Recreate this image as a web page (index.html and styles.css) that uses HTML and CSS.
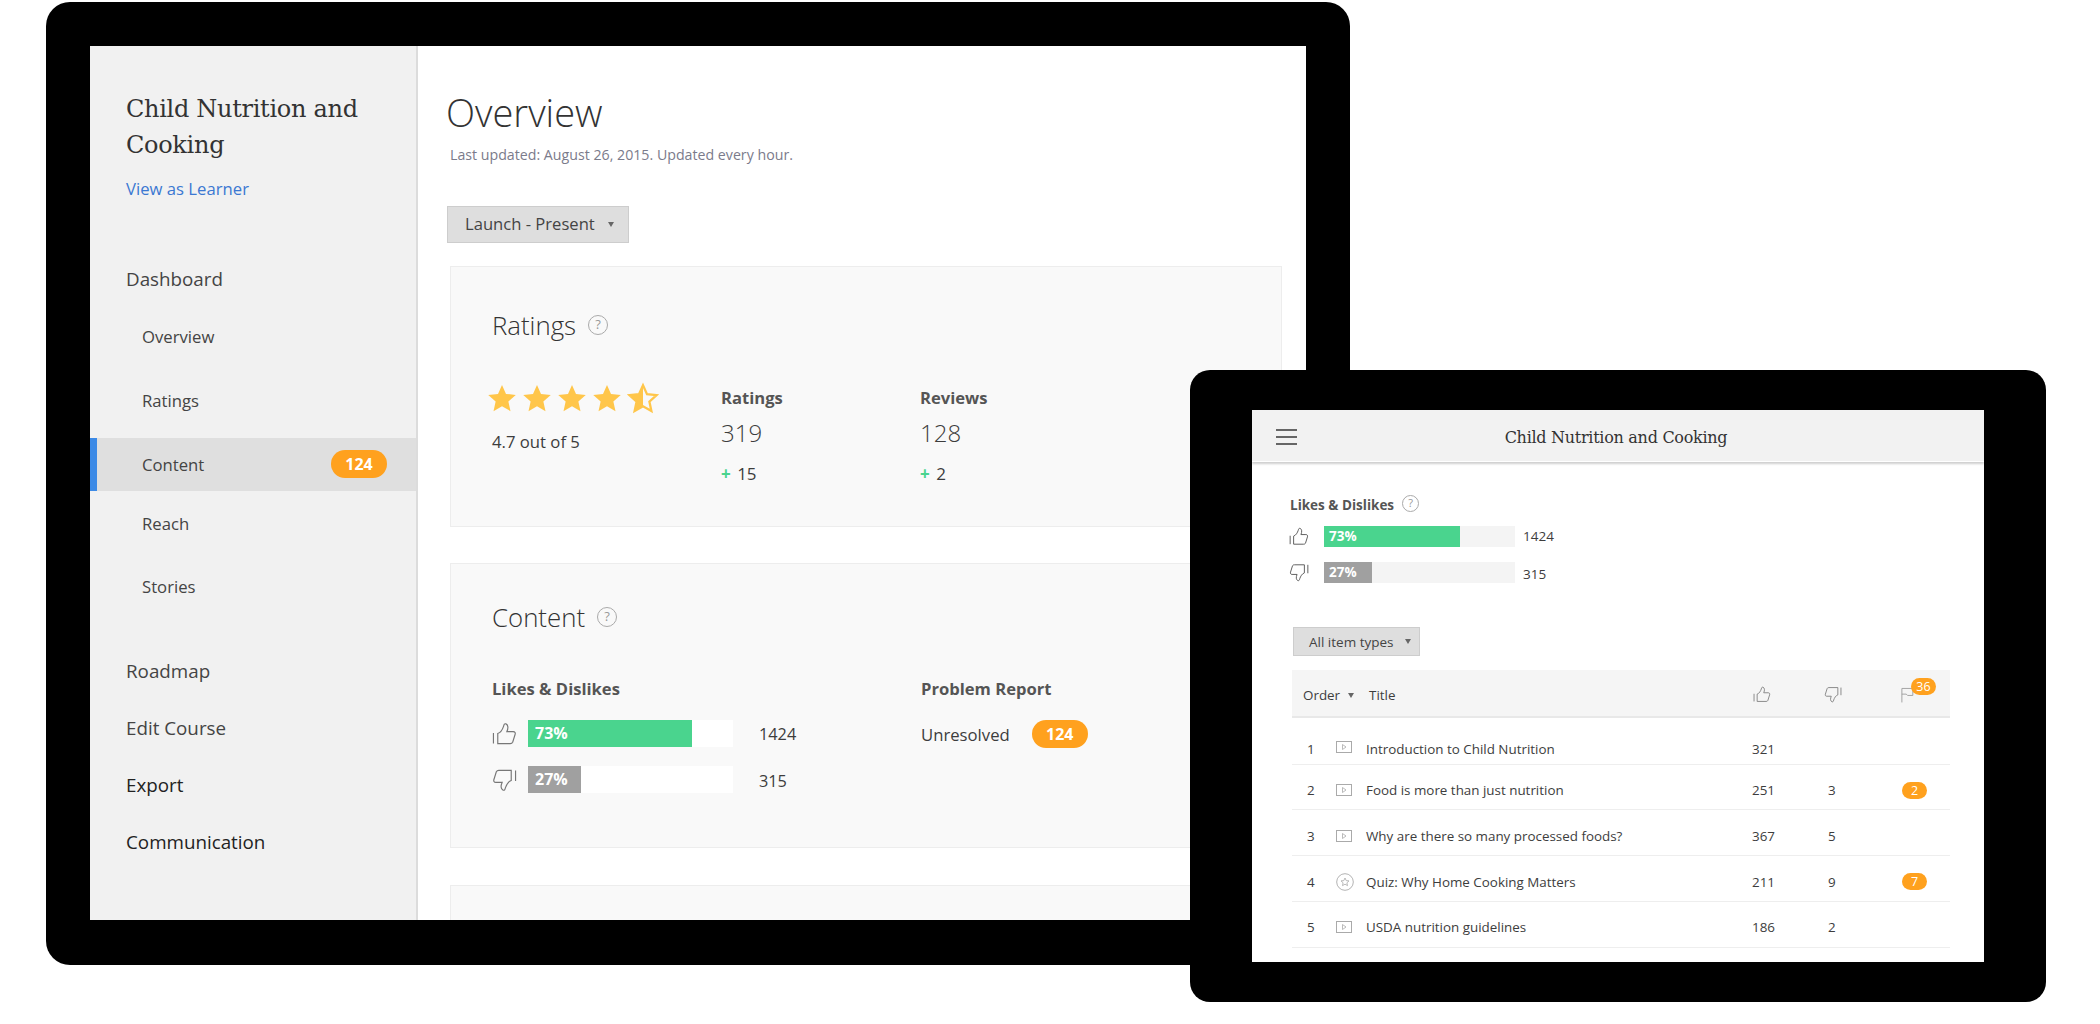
FILE: index.html
```html
<!DOCTYPE html>
<html lang="en">
<head>
  <meta charset="UTF-8" />
  <title>Child Nutrition and Cooking - Overview</title>
  <link rel="stylesheet" href="styles.css">
</head>
<body>
  <svg class="defs" width="0" height="0">
    <symbol id="thumb" viewBox="0 0 26 24">
      <path d="M1.5 11v11M6 22V11.5C9 10.5 11 7 12 4C12.5 2 13 1 14.5 1.5C17 2.5 17 6 15.5 9.5H22C24 9.5 24.5 11 24 12.5L21.5 20.5C21 21.5 20.5 22 19 22Z" fill="none" stroke="currentColor" stroke-width="1.2"/>
    </symbol>
    <symbol id="star" viewBox="0 0 24 24">
      <path d="M12 1.5l3.2 7.2 7.8.8-5.9 5.2 1.7 7.8L12 18.5l-6.8 4 1.7-7.8L1 9.5l7.8-.8z" fill="currentColor"/>
    </symbol>
    <symbol id="halfstar" viewBox="0 0 24 24">
      <path d="M12 3L8.8 9.2 2 9.9l5.2 4.7-1.5 7 6.3-3.6z" fill="currentColor"/>
      <path d="M12 2.5l3 6.6 7.2.8-5.4 4.8 1.5 7.1L12 18.2l-6.3 3.6 1.5-7.1L1.8 9.9 9 9.1z" fill="none" stroke="currentColor" stroke-width="1.7"/>
    </symbol>
    <symbol id="video" viewBox="0 0 16 12">
      <rect x="0.5" y="0.5" width="15" height="11" fill="none" stroke="currentColor"/>
      <path d="M6.5 3.5l3.5 2.5-3.5 2.5z" fill="none" stroke="currentColor" stroke-width="0.8"/>
    </symbol>
    <symbol id="quiz" viewBox="0 0 18 18">
      <circle cx="9" cy="9" r="8.3" fill="none" stroke="currentColor" stroke-width="0.9"/>
      <path d="M9 5l1.2 2.6 2.8.3-2.1 1.9.6 2.8L9 11.2l-2.5 1.4.6-2.8L5 7.9l2.8-.3z" fill="none" stroke="currentColor" stroke-width="0.8"/>
    </symbol>
    <symbol id="flag" viewBox="0 0 16 18">
      <path d="M1 17.5V1.5H13.5V9.5H7.5L6 8H1" fill="none" stroke="currentColor" stroke-width="1"/>
    </symbol>
  </svg>

  <!-- DESKTOP -->
  <div class="device device-large">
    <div class="screen screen-large">
      <aside class="sidebar">
        <h2 class="course-title">Child Nutrition and Cooking</h2>
        <a class="learner-link">View as Learner</a>
        <nav>
          <div class="nav-section nav-dashboard">Dashboard</div>
          <div class="nav-item">Overview</div>
          <div class="nav-item">Ratings</div>
          <div class="nav-item active">Content <span class="badge badge-nav">124</span></div>
          <div class="nav-item nav-reach">Reach</div>
          <div class="nav-item nav-stories">Stories</div>
          <div class="nav-section nav-roadmap">Roadmap</div>
          <div class="nav-section">Edit Course</div>
          <div class="nav-section dark">Export</div>
          <div class="nav-section dark">Communication</div>
        </nav>
      </aside>

      <main class="main">
        <h1>Overview</h1>
        <p class="updated">Last updated: August 26, 2015. Updated every hour.</p>
        <div class="dropdown dropdown-large"><span class="dropdown-text">Launch - Present</span> <span class="caret"></span></div>

        <section class="card card-ratings">
          <h3>Ratings <span class="help">?</span></h3>
          <div class="stats">
            <div class="stat-score">
              <div class="stars">
                <svg><use href="#star"/></svg>
                <svg><use href="#star"/></svg>
                <svg><use href="#star"/></svg>
                <svg><use href="#star"/></svg>
                <svg><use href="#halfstar"/></svg>
              </div>
              <div class="score-text">4.7 out of 5</div>
            </div>
            <div class="stat stat-first">
              <div class="label">Ratings</div>
              <div class="value">319</div>
              <div class="delta"><span class="plus">+</span> 15</div>
            </div>
            <div class="stat">
              <div class="label">Reviews</div>
              <div class="value">128</div>
              <div class="delta"><span class="plus">+</span> 2</div>
            </div>
          </div>
        </section>

        <section class="card card-content">
          <h3>Content <span class="help">?</span></h3>
          <div class="content-cols">
            <div class="likes">
              <div class="label">Likes &amp; Dislikes</div>
              <div class="bar-row bar-row-first">
                <svg class="thumb"><use href="#thumb"/></svg>
                <div class="bar"><div class="fill fill-up" style="width: 80%">73%</div></div>
                <span class="count">1424</span>
              </div>
              <div class="bar-row">
                <svg class="thumb thumb-down"><use href="#thumb"/></svg>
                <div class="bar"><div class="fill fill-down" style="width: 26%">27%</div></div>
                <span class="count count-low">315</span>
              </div>
            </div>
            <div class="problems">
              <div class="label">Problem Report</div>
              <div class="unresolved">Unresolved <span class="badge badge-problem">124</span></div>
            </div>
          </div>
        </section>

        <section class="card card-empty"></section>
      </main>
    </div>
  </div>

  <!-- TABLET -->
  <div class="device device-small">
    <div class="screen screen-small">
      <header class="topbar">
        <div class="hamburger"><span></span><span></span><span></span></div>
        <div class="topbar-title">Child Nutrition and Cooking</div>
      </header>

      <div class="small-body">
        <div class="small-label">Likes &amp; Dislikes <span class="help help-small">?</span></div>
        <div class="small-bar-row small-bar-first">
          <svg class="small-thumb"><use href="#thumb"/></svg>
          <div class="small-bar"><div class="fill fill-up" style="width: 71%">73%</div></div>
          <span class="small-count count-high">1424</span>
        </div>
        <div class="small-bar-row">
          <svg class="small-thumb thumb-down"><use href="#thumb"/></svg>
          <div class="small-bar"><div class="fill fill-down" style="width: 25%">27%</div></div>
          <span class="small-count count-low">315</span>
        </div>

        <div class="dropdown dropdown-small"><span class="dropdown-text">All item types</span> <span class="caret"></span></div>

        <div class="table">
          <div class="table-head">
            <div class="head-order">Order <span class="caret"></span></div>
            <div>Title</div>
            <svg class="head-icon"><use href="#thumb"/></svg>
            <svg class="head-icon thumb-down"><use href="#thumb"/></svg>
            <div class="head-flag">
              <svg class="flag"><use href="#flag"/></svg>
              <span class="pill pill-head">36</span>
            </div>
          </div>

          <div class="table-row row-first">
            <span class="num">1</span>
            <svg class="type-video"><use href="#video"/></svg>
            <span>Introduction to Child Nutrition</span>
            <span>321</span>
            <span></span>
            <span></span>
          </div>
          <div class="table-row row-second">
            <span class="num">2</span>
            <svg class="type-video"><use href="#video"/></svg>
            <span>Food is more than just nutrition</span>
            <span>251</span>
            <span>3</span>
            <span class="pill">2</span>
          </div>
          <div class="table-row">
            <span class="num">3</span>
            <svg class="type-video"><use href="#video"/></svg>
            <span>Why are there so many processed foods?</span>
            <span>367</span>
            <span>5</span>
            <span></span>
          </div>
          <div class="table-row">
            <span class="num">4</span>
            <svg class="type-quiz"><use href="#quiz"/></svg>
            <span>Quiz: Why Home Cooking Matters</span>
            <span>211</span>
            <span>9</span>
            <span class="pill">7</span>
          </div>
          <div class="table-row row-last">
            <span class="num">5</span>
            <svg class="type-video"><use href="#video"/></svg>
            <span>USDA nutrition guidelines</span>
            <span>186</span>
            <span>2</span>
            <span></span>
          </div>
        </div>
      </div>
    </div>
  </div>
</body>
</html>
```

FILE: styles.css
```css
* {
  box-sizing: border-box;
}

body {
  font-family: "Open Sans", Arial, sans-serif;
  background-color: white;
  color: #3d3d3d;
  margin: 0;
  width: 2100px;
  height: 1024px;
  position: relative;
  overflow: hidden;
}

.defs {
  position: absolute;
}

/* DEVICES */
.device {
  position: absolute;
  background-color: black;
}

.device-large {
  left: 46px;
  top: 2px;
  width: 1304px;
  height: 963px;
  border-radius: 24px;
  padding: 44px;
}

.device-small {
  left: 1190px;
  top: 370px;
  width: 856px;
  height: 632px;
  border-radius: 20px;
  padding: 40px 62px;
}

.screen {
  background-color: white;
  overflow: hidden;
}

.screen-large {
  width: 1216px;
  height: 874px;
  display: flex;
}

.screen-small {
  width: 732px;
  height: 552px;
}

/* SIDEBAR */
.sidebar {
  width: 328px;
  flex-shrink: 0;
  background-color: #f1f1f1;
  border-right: 2px solid #dcdcdc;
  padding-top: 45px;
}

.course-title {
  font-family: "DejaVu Serif", serif;
  font-weight: normal;
  font-size: 24px;
  line-height: 36px;
  color: #333;
  margin: 0 30px 0 36px;
  letter-spacing: -0.3px;
}

.learner-link {
  display: block;
  color: #3b78d2;
  font-size: 16.7px;
  line-height: 24px;
  margin: 14px 0 0 36px;
}

.nav-section {
  height: 40px;
  line-height: 40px;
  font-size: 18.8px;
  margin: 17px 0 0 36px;
  color: #444;
}

.nav-dashboard {
  margin-top: 58px;
}

.nav-roadmap {
  margin-top: 38px;
}

.dark {
  color: #222;
}

.nav-item {
  height: 53px;
  line-height: 53px;
  padding-left: 52px;
  font-size: 16.7px;
  margin-top: 11px;
  color: #444;
  position: relative;
}

.nav-item.active {
  background-color: #dfdfdf;
  border-left: 7px solid #3c8ae6;
  padding-left: 45px;
}

.nav-reach {
  margin-top: 6px;
}

.nav-stories {
  margin-top: 10px;
}

.badge {
  display: inline-block;
  background-color: #ffa11e;
  color: white;
  font-weight: bold;
  font-size: 16px;
  height: 28px;
  line-height: 28px;
  width: 56px;
  border-radius: 14px;
  text-align: center;
}

.badge-nav {
  position: absolute;
  right: 29px;
  top: 12px;
}

/* MAIN */
.main {
  flex: 1;
  padding: 41px 24px 0 32px;
  overflow: hidden;
}

h1 {
  font-weight: 300;
  font-size: 38px;
  line-height: 50px;
  margin: 0 0 0 -4px;
  color: #333;
}

.updated {
  font-size: 14.2px;
  line-height: 20px;
  margin: 8px 0 0 0;
  color: #7b7b8b;
}

.dropdown {
  background-color: #dedede;
  border: 1px solid #cdcdcd;
  display: flex;
  align-items: center;
  position: relative;
  color: #444;
}

.dropdown-text {
  margin-top: -2px;
}

.dropdown-large {
  width: 182px;
  height: 37px;
  margin: 41px 0 0 -3px;
  padding-left: 17px;
  font-size: 16.6px;
  gap: 13px;
}

.caret {
  display: inline-block;
  border-top: 5px solid #666;
  border-left: 3.5px solid transparent;
  border-right: 3.5px solid transparent;
}

.card {
  background-color: #f9f9f9;
  border: 1px solid #ededed;
  padding-left: 41px;
}

.card h3 {
  font-weight: 300;
  font-size: 25.8px;
  line-height: 34px;
  margin: 0;
  color: #333;
  display: flex;
  align-items: center;
  gap: 12px;
}

.card-ratings {
  height: 261px;
  margin-top: 23px;
  padding-top: 41px;
}

.card-content {
  height: 285px;
  margin-top: 36px;
  padding-top: 36px;
}

.card-empty {
  height: 100px;
  margin-top: 37px;
}

.help {
  display: inline-block;
  width: 20px;
  height: 20px;
  line-height: 17px;
  border: 1.5px solid #aaa;
  border-radius: 50%;
  text-align: center;
  font-size: 13px;
  font-weight: normal;
  color: #999;
}

.stats {
  display: flex;
  margin-top: 44px;
}

.stat-score {
  width: 229px;
}

.stars {
  display: flex;
  height: 28px;
  margin: -3px 0 0 -5px;
  gap: 5px;
  color: #ffc64a;
}

.stars svg {
  width: 30px;
  height: 30px;
}

.stars svg:last-child {
  width: 32px;
  height: 32px;
  margin-top: -1px;
}

.score-text {
  font-size: 16.7px;
  line-height: 24px;
  margin-top: 19px;
}

.stat {
  width: 199px;
}

.label {
  font-weight: bold;
  font-size: 16.6px;
  line-height: 24px;
  color: #555;
}

.value {
  font-weight: 300;
  font-size: 24px;
  line-height: 34px;
  margin-top: 6px;
}

.delta {
  font-size: 17px;
  line-height: 24px;
  margin-top: 12px;
}

.plus {
  color: #4ad48e;
  font-weight: bold;
  margin-right: 2px;
}

.content-cols {
  display: flex;
  margin-top: 43px;
}

.likes {
  width: 429px;
}

.bar-row {
  display: flex;
  align-items: center;
  height: 27px;
  margin-top: 19px;
}

.thumb {
  width: 25px;
  height: 24px;
  margin-right: 11px;
  color: #777;
}

.thumb-down {
  transform: rotate(180deg);
}

.bar {
  width: 205px;
  height: 27px;
  background-color: white;
}

.fill {
  height: 100%;
  color: white;
  font-weight: bold;
  padding-left: 7px;
}

.bar .fill {
  font-size: 16px;
  line-height: 27px;
}

.fill-up {
  background-color: #4ad48e;
}

.fill-down {
  background-color: #a0a0a0;
}

.count {
  margin-left: 26px;
  font-size: 16.3px;
}

.count-low {
  padding-top: 3px;
}

.count-high {
  padding-bottom: 2px;
}

.unresolved {
  display: flex;
  align-items: center;
  gap: 22px;
  font-size: 16.7px;
  height: 28px;
  margin-top: 19px;
}

/* TABLET */
.topbar {
  height: 52px;
  background-color: #f2f2f2;
  border-bottom: 1px solid white;
  box-shadow: 0 2px 2px #cfcfcf;
  display: flex;
  align-items: center;
  padding-left: 24px;
  position: relative;
}

.hamburger {
  width: 21px;
  margin-top: -3px;
}

.hamburger span {
  display: block;
  height: 2px;
  background-color: #666;
  margin-top: 5px;
}

.topbar-title {
  flex: 1;
  text-align: center;
  font-family: "DejaVu Serif", serif;
  font-size: 16px;
  color: #333;
  padding: 4px 49px 0 0;
  letter-spacing: -0.28px;
}

.small-body {
  padding: 33px 0 0 38px;
}

.small-label {
  font-weight: bold;
  font-size: 13.5px;
  line-height: 20px;
  color: #555;
  display: flex;
  align-items: center;
  gap: 8px;
}

.help-small {
  width: 17px;
  height: 17px;
  line-height: 14.5px;
  font-size: 11px;
  margin-top: -4px;
}

.small-bar-row {
  display: flex;
  align-items: center;
  height: 21px;
  margin-top: 15px;
}

.small-bar-first {
  margin-top: 11px;
}

.small-thumb {
  width: 20px;
  height: 19px;
  margin-right: 14px;
  color: #555;
  margin-left: -1px;
  margin-right: 15px;
}

.small-bar {
  width: 191px;
  height: 21px;
  background-color: #f4f4f4;
}

.small-bar .fill {
  font-size: 13.5px;
  line-height: 21px;
  padding-left: 5px;
}

.small-count {
  margin-left: 8px;
  font-size: 13.5px;
}

.dropdown-small {
  width: 127px;
  height: 29px;
  margin: 44px 0 0 3px;
  padding-left: 15px;
  font-size: 13.5px;
  gap: 11px;
}

.dropdown-small .dropdown-text {
  margin-top: 0;
}

.table {
  width: 658px;
  margin: 14px 0 0 2px;
  font-size: 13.4px;
}

.table-head {
  display: grid;
  grid-template-columns: 77px 384px 71px 77px auto;
  align-items: center;
  height: 48px;
  padding-top: 3px;
  background-color: #f5f5f5;
  border-bottom: 2px solid #e8e8e8;
}

.head-order {
  padding-left: 11px;
}

.head-order .caret {
  margin-left: 4px;
  vertical-align: middle;
}

.head-icon {
  width: 18px;
  height: 17px;
  color: #777;
}

.head-flag {
  position: relative;
  height: 18px;
}

.flag {
  width: 14px;
  height: 18px;
  color: #999;
  display: block;
}

.pill {
  display: block;
  width: 25px;
  height: 17px;
  line-height: 17px;
  border-radius: 9px;
  background-color: #ffa11e;
  color: white;
  text-align: center;
  font-size: 12.5px;
}

.pill-head {
  position: absolute;
  left: 10px;
  top: -8px;
}

.table-row {
  display: grid;
  grid-template-columns: 44px 30px 386px 76px 74px auto;
  align-items: center;
  height: 46px;
  padding-top: 6px;
  border-bottom: 1px solid #eee;
}

.table-row .type-video,
.table-row .type-quiz {
  margin-left: 0;
}

.row-first {
  height: 47px;
  padding-top: 16px;
}

.row-first .type-video {
  margin-bottom: 4px;
}

.row-second {
  height: 45px;
}

.row-last {
  padding-top: 4px;
}

.num {
  padding-left: 15px;
}

.type-video {
  width: 16px;
  height: 12px;
  color: #aaa;
}

.type-quiz {
  width: 18px;
  height: 18px;
  color: #aaa;
}
```
